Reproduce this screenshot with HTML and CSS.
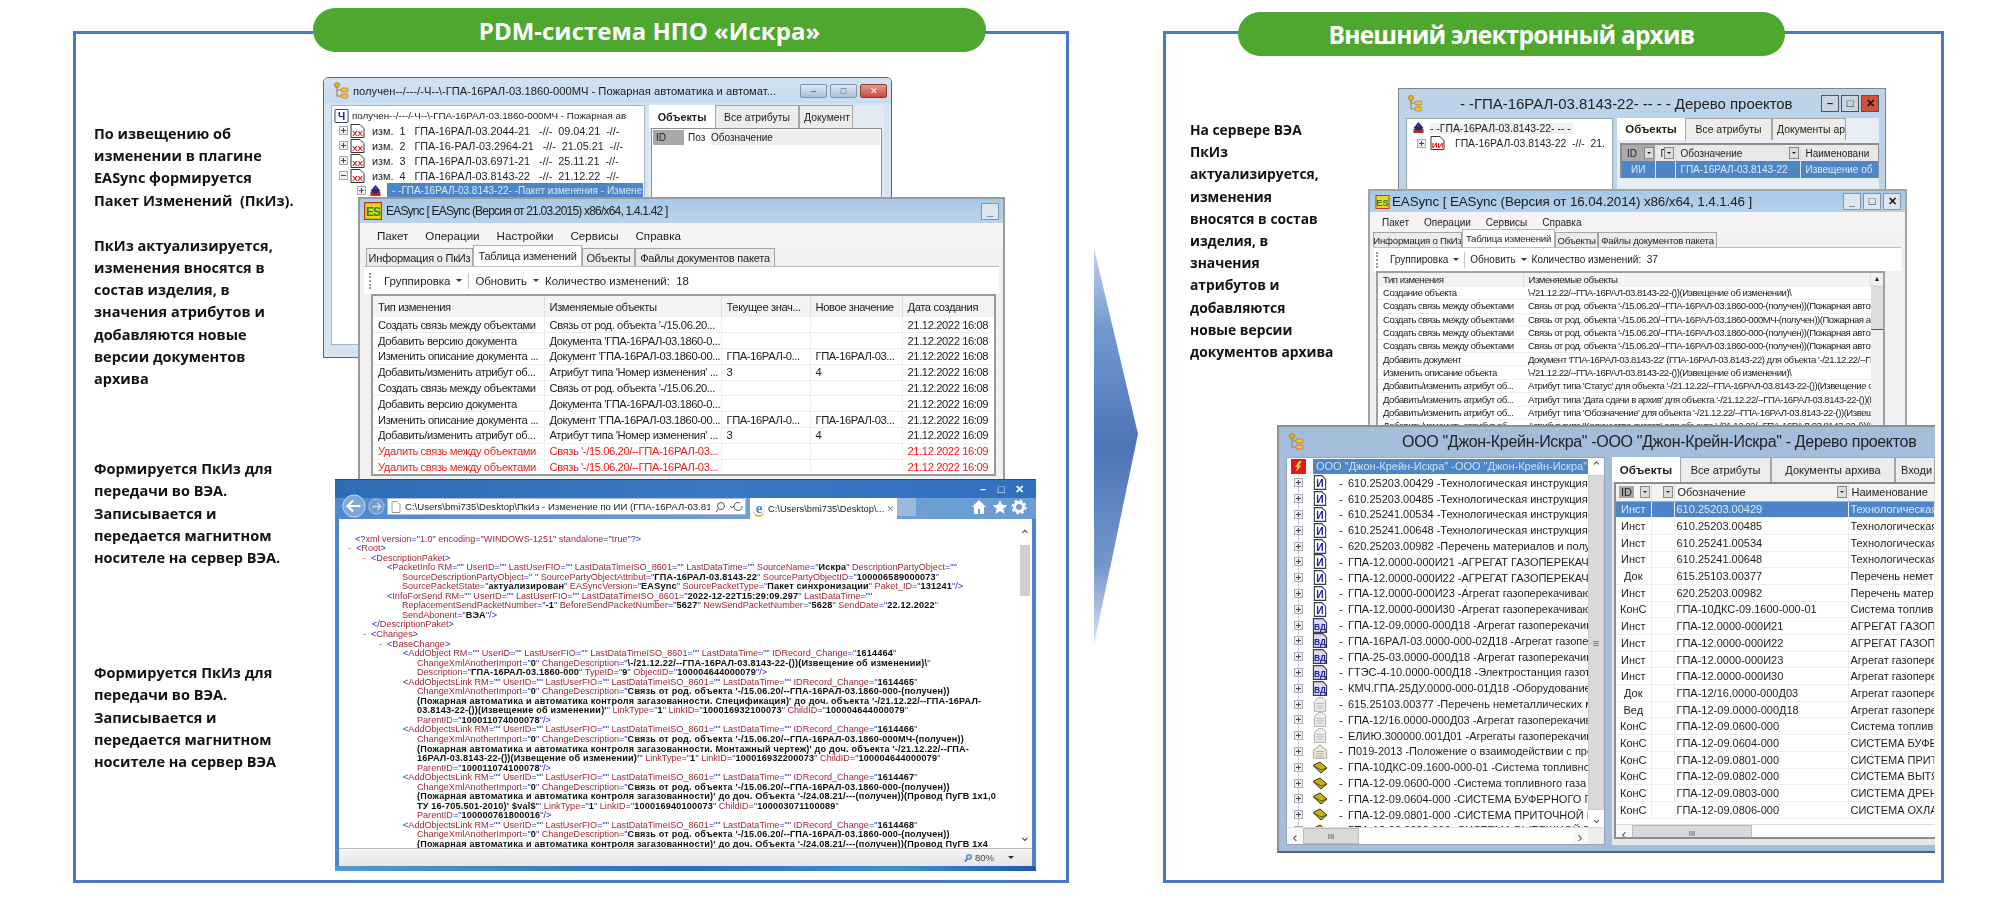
FILE: index.html
```html
<!DOCTYPE html>
<html lang="ru">
<head>
<meta charset="utf-8">
<title>PDM-система НПО «Искра» и внешний электронный архив</title>
<link rel="stylesheet" href="styles.css">
</head>
<body>
<svg class="defs" width="0" height="0" aria-hidden="true">
  <defs>
    <symbol id="tree-ico" viewBox="0 0 16 18">
      <path d="M4 3v11h5M4 8h5" fill="none" stroke="#9a8a50" stroke-width="1.2"/>
      <circle cx="4" cy="3" r="2.6" fill="#e8b030" stroke="#a87818" stroke-width=".7"/>
      <rect x="8" y="6" width="7" height="4" rx="1.6" fill="#f0c040" stroke="#a87818" stroke-width=".7"/>
      <rect x="8" y="12" width="7" height="4" rx="1.6" fill="#f0c040" stroke="#a87818" stroke-width=".7"/>
    </symbol>
    <symbol id="plus" viewBox="0 0 9 9">
      <rect x=".5" y=".5" width="8" height="8" fill="#eef1f4" stroke="#a6acb2"/>
      <path d="M2 4.5h5M4.5 2v5" stroke="#3c4a58"/>
    </symbol>
    <symbol id="minus" viewBox="0 0 9 9">
      <rect x=".5" y=".5" width="8" height="8" fill="#eef1f4" stroke="#a6acb2"/>
      <path d="M2 4.5h5" stroke="#3c4a58"/>
    </symbol>
    <symbol id="doc-xx" viewBox="0 0 15 14">
      <path d="M1 .5h9l4 4v9H1z" fill="#fff" stroke="#333"/>
      <text x="7.5" y="12" class="sym-red">XX</text>
    </symbol>
    <symbol id="doc-ii" viewBox="0 0 15 14">
      <path d="M1 .5h9l4 4v9H1z" fill="#fff" stroke="#333"/>
      <text x="7.5" y="12" class="sym-red">ИИ</text>
    </symbol>
    <symbol id="doc-i" viewBox="0 0 14 16">
      <path d="M1 .7h8l4 4v10.6H1z" fill="#fff" stroke="#3a3a4a" stroke-width="1.2"/>
      <text x="7" y="13" class="sym-blue">И</text>
    </symbol>
    <symbol id="doc-vd" viewBox="0 0 16 16">
      <path d="M1 .7h10l4 4v10.6H1z" fill="#d8d8ee" stroke="#3a3a4a" stroke-width="1.2"/>
      <text x="8" y="13" class="sym-blue2">ВД</text>
    </symbol>
    <symbol id="doc-gray" viewBox="0 0 14 16">
      <path d="M5 .7h5l3 3v11.6H1V5z" fill="#ececec" stroke="#a8a8a8"/>
      <path d="M3 7h8M3 9.5h8M3 12h8" stroke="#b4b4b4"/>
    </symbol>
    <symbol id="doc-house" viewBox="0 0 16 16">
      <path d="M8 .7l7 6v8.6H1V6.700z" fill="#ece6d8" stroke="#a8a090"/>
      <path d="M4 8h8M4 10.500h8M4 13h8" stroke="#b0a896"/>
    </symbol>
    <symbol id="brick" viewBox="0 0 16 12">
      <path d="M1 4l7-3.500 7 6-6 5z" fill="#ccb010" stroke="#30300c"/>
      <path d="M1 4l8 4.500 6-2" fill="none" stroke="#5c5410"/>
    </symbol>
    <symbol id="books" viewBox="0 0 14 14">
      <rect x="2" y="8" width="10" height="4" fill="#b02828"/>
      <path d="M2 7l5-6 5 6-5 3z" fill="#28286c"/>
      <circle cx="7" cy="4" r="2" fill="#3038a0"/>
    </symbol>
    <symbol id="es" viewBox="0 0 15 15">
      <rect x=".5" y=".5" width="14" height="14" fill="#e6d820" stroke="#c03020"/>
      <text x="7.500" y="11.300" class="sym-es">ES</text>
    </symbol>
    <symbol id="xdoc" viewBox="0 0 15 15">
      <rect x=".5" y=".5" width="14" height="14" rx="1" fill="#fff" stroke="#29295c"/>
      <text x="7.500" y="12" class="sym-blue">Ч</text>
    </symbol>
  </defs>
</svg>

<main class="slide">
  <section class="panel panel-left">
    <h2 class="pill pill-left">PDM-система НПО «Искра»</h2>
    <div class="notes notes-left">
      <p class="note n1">По извещению об<br>изменении в плагине<br>EASync формируется<br>Пакет Изменений&nbsp; (ПкИз).</p>
      <p class="note n2">ПкИз актуализируется,<br>изменения вносятся в<br>состав изделия, в<br>значения атрибутов и<br>добавляются новые<br>версии документов<br>архива</p>
      <p class="note n3">Формируется ПкИз для<br>передачи во ВЭА.<br>Записывается и<br>передается магнитном<br>носителе на сервер ВЭА.</p>
      <p class="note">Формируется ПкИз для<br>передачи во ВЭА.<br>Записывается и<br>передается магнитном<br>носителе на сервер ВЭА</p>
    </div>

    <!-- Окно дерева извещений -->
    <article class="win win1">
      <header class="w1-title">
        <svg class="ico16"><use href="#tree-ico"/></svg>
        <span class="w1-title-text">получен--/---/-Ч--\-ГПА-16РАЛ-03.1860-000МЧ - Пожарная автоматика и автомат...</span>
        <span class="aero-btns"><i class="aero-btn">&#8211;</i><i class="aero-btn">&#9633;</i><i class="aero-btn aero-close">&#10005;</i></span>
      </header>
      <div class="w1-body">
        <div class="w1-tree">
          <div class="w1-row w1-root"><svg class="ico15"><use href="#xdoc"/></svg><span>получен--/---/-Ч--\-ГПА-16РАЛ-03.1860-000МЧ - Пожарная ав</span></div>
          <div class="w1-row"><svg class="ico9"><use href="#plus"/></svg><svg class="ico15"><use href="#doc-xx"/></svg><span>изм.&nbsp; 1&nbsp;&nbsp; ГПА-16РАЛ-03.2044-21&nbsp;&nbsp; -//-&nbsp; 09.04.21&nbsp; -//-</span></div>
          <div class="w1-row"><svg class="ico9"><use href="#plus"/></svg><svg class="ico15"><use href="#doc-xx"/></svg><span>изм.&nbsp; 2&nbsp;&nbsp; ГПА-16-РАЛ-03.2964-21&nbsp;&nbsp; -//-&nbsp; 21.05.21&nbsp; -//-</span></div>
          <div class="w1-row"><svg class="ico9"><use href="#plus"/></svg><svg class="ico15"><use href="#doc-xx"/></svg><span>изм.&nbsp; 3&nbsp;&nbsp; ГПА-16РАЛ-03.6971-21&nbsp;&nbsp; -//-&nbsp; 25.11.21&nbsp; -//-</span></div>
          <div class="w1-row"><svg class="ico9"><use href="#minus"/></svg><svg class="ico15"><use href="#doc-xx"/></svg><span>изм.&nbsp; 4&nbsp;&nbsp; ГПА-16РАЛ-03.8143-22&nbsp;&nbsp; -//-&nbsp; 21.12.22&nbsp; -//-</span></div>
          <div class="w1-row w1-child"><svg class="ico9"><use href="#plus"/></svg><svg class="ico15"><use href="#books"/></svg><span class="w1-sel">- -ГПА-16РАЛ-03.8143-22- -Пакет изменения - Измене</span></div>
        </div>
        <div class="w1-side">
          <div class="tabs w1-tabs">
            <span class="tab tab-bold w1-t1">Объекты</span><span class="tab w1-t2">Все атрибуты</span><span class="tab w1-t3">Документ</span>
          </div>
          <div class="w1-grid"><span class="w1-id">ID</span><span class="w1-poz">Поз</span><span>Обозначение</span></div>
        </div>
      </div>
    </article>

    <!-- EASync, таблица изменений пакета -->
    <article class="win win2">
      <header class="w2-title"><svg class="ico18"><use href="#es"/></svg><span>EASync [ EASync (Версия от 21.03.2015) x86/x64, 1.4.1.42 ]</span><span class="sq-btns"><i class="sq-btn">_</i></span></header>
      <nav class="w2-menu"><span>Пакет</span><span>Операции</span><span>Настройки</span><span>Сервисы</span><span>Справка</span></nav>
      <div class="tabs w2-tabs">
        <span class="tab w2-t1">Информация о ПкИз</span><span class="tab tab-on w2-t2">Таблица изменений</span><span class="tab w2-t3">Объекты</span><span class="tab w2-t4">Файлы документов пакета</span>
      </div>
      <div class="w2-tools"><i class="grip"></i><span>Группировка</span><i class="caret"></i><i class="sep"></i><span>Обновить</span><i class="caret"></i><span>Количество изменений:&nbsp; 18</span></div>
      <table class="grid w2-grid">
        <thead><tr><th class="w2-c1">Тип изменения</th><th class="w2-c2">Изменяемые объекты</th><th class="w2-c3">Текущее знач...</th><th class="w2-c4">Новое значение</th><th class="w2-c5">Дата создания</th></tr></thead>
        <tbody>
          <tr><td>Создать связь между объектами</td><td>Связь от род. объекта '-/15.06.20...</td><td></td><td></td><td>21.12.2022 16:08</td></tr>
          <tr><td>Добавить версию документа</td><td>Документа 'ГПА-16РАЛ-03.1860-0...</td><td></td><td></td><td>21.12.2022 16:08</td></tr>
          <tr><td>Изменить описание документа ...</td><td>Документ 'ГПА-16РАЛ-03.1860-00...</td><td>ГПА-16РАЛ-0...</td><td>ГПА-16РАЛ-03...</td><td>21.12.2022 16:08</td></tr>
          <tr><td>Добавить/изменить атрибут об...</td><td>Атрибут типа 'Номер изменения' ...</td><td>3</td><td>4</td><td>21.12.2022 16:08</td></tr>
          <tr><td>Создать связь между объектами</td><td>Связь от род. объекта '-/15.06.20...</td><td></td><td></td><td>21.12.2022 16:08</td></tr>
          <tr><td>Добавить версию документа</td><td>Документа 'ГПА-16РАЛ-03.1860-0...</td><td></td><td></td><td>21.12.2022 16:09</td></tr>
          <tr><td>Изменить описание документа ...</td><td>Документ 'ГПА-16РАЛ-03.1860-00...</td><td>ГПА-16РАЛ-0...</td><td>ГПА-16РАЛ-03...</td><td>21.12.2022 16:09</td></tr>
          <tr><td>Добавить/изменить атрибут об...</td><td>Атрибут типа 'Номер изменения' ...</td><td>3</td><td>4</td><td>21.12.2022 16:09</td></tr>
          <tr class="red"><td>Удалить связь между объектами</td><td>Связь '-/15.06.20/--ГПА-16РАЛ-03...</td><td></td><td></td><td>21.12.2022 16:09</td></tr>
          <tr class="red"><td>Удалить связь между объектами</td><td>Связь '-/15.06.20/--ГПА-16РАЛ-03...</td><td></td><td></td><td>21.12.2022 16:09</td></tr>
        </tbody>
      </table>
    </article>

    <!-- Браузер с XML пакета -->
    <article class="win win3">
      <div class="glass-top"><span class="glass-ctl"><i>&#8211;</i><i>&#9633;</i><i>&#10005;</i></span></div>
      <div class="glass-nav">
        <svg class="nav-back" viewBox="0 0 26 26"><circle cx="13" cy="13" r="12" fill="#7da8da" stroke="#cfe0f2"/><path d="M20 13H7m5-6l-6 6 6 6" fill="none" stroke="#fff" stroke-width="2.400"/></svg>
        <svg class="nav-fwd" viewBox="0 0 20 20"><circle cx="10" cy="10" r="9" fill="#6f9ed4" stroke="#b8d0ea"/><path d="M5 10h10M11 6l4 4-4 4" fill="none" stroke="#cfe0f2" stroke-width="1.600"/></svg>
        <div class="addr"><svg class="addr-page" viewBox="0 0 10 12"><path d="M1 .5h5l3 3v8H1z" fill="#fff" stroke="#9a9a9a"/></svg><span class="addr-text">C:\Users\bmi735\Desktop\ПкИз - Изменение по ИИ (ГПА-16РАЛ-03.8143-2;</span><svg class="addr-search" viewBox="0 0 30 12"><circle cx="7" cy="5" r="3.500" fill="none" stroke="#555"/><path d="M4 8l-2 3M16 5l2 2 2-2M26 2a4 4 0 1 0 2 3" fill="none" stroke="#555"/></svg></div>
        <div class="ie-tab"><span class="ie-e">e</span><span class="ie-text">C:\Users\bmi735\Desktop\...</span><span class="ie-x">&#215;</span></div>
        <i class="ie-new"></i>
        <svg class="ie-tools" viewBox="0 0 56 16"><path d="M8 1L1 8h2v7h4v-5h2v5h4V8h2z" fill="#fff"/><path d="M29 1l2.100 4.800 5.200.5-3.900 3.400 1.100 5.100-4.500-2.700-4.500 2.700 1.100-5.100-3.900-3.400 5.200-.5z" fill="#fff"/><circle cx="48" cy="8" r="4.500" fill="none" stroke="#fff" stroke-width="3"/><circle cx="48" cy="8" r="6.500" fill="none" stroke="#fff" stroke-width="2" stroke-dasharray="2.500 2.600"/></svg>
      </div>
      <div class="ie-page">
        <div class="xml">
          <div class="x i16"><i>&lt;?</i>xml version<i>="</i>1.0<i>"</i> encoding<i>="</i>WINDOWS-1251<i>"</i> standalone<i>="</i>true<i>"?&gt;</i></div>
          <div class="x i9"><s>-</s><i>&lt;</i>Root<i>&gt;</i></div>
          <div class="x i24"><s>-</s><i>&lt;</i>DescriptionPaket<i>&gt;</i></div>
          <div class="x i48"><i>&lt;</i>PacketInfo RM<i>=""</i> UserID<i>=""</i> LastUserFIO<i>=""</i> LastDataTimeISO_8601<i>=""</i> LastDataTime<i>=""</i> SourceName<i>="</i><b>Искра</b><i>"</i> DescriptionPartyObject<i>=""</i></div>
          <div class="x i63">SourceDescriptionPartyObject<i>=" "</i> SourcePartyObjectAttribut<i>="</i><b>ГПА-16РАЛ-03.8143-22</b><i>"</i> SourcePartyObjectID<i>="</i><b>100006589000073</b><i>"</i></div>
          <div class="x i63">SourcePacketState<i>="</i><b>актуализирован</b><i>"</i> EASyncVersion<i>="</i><b>EASync</b><i>"</i> SourcePacketType<i>="</i><b>Пакет синхронизации</b><i>"</i> Paket_ID<i>="</i><b>131241</b><i>"/&gt;</i></div>
          <div class="x i48"><i>&lt;</i>InfoForSend RM<i>=""</i> UserID<i>=""</i> LastUserFIO<i>=""</i> LastDataTimeISO_8601<i>="</i><b>2022-12-22T15:29:09.297</b><i>"</i> LastDataTime<i>=""</i></div>
          <div class="x i63">ReplacementSendPacketNumber<i>="</i><b>-1</b><i>"</i> BeforeSendPacketNumber<i>="</i><b>5627</b><i>"</i> NewSendPacketNumber<i>="</i><b>5628</b><i>"</i> SendDate<i>="</i><b>22.12.2022</b><i>"</i></div>
          <div class="x i63">SendAbonent<i>="</i><b>ВЭА</b><i>"/&gt;</i></div>
          <div class="x i33"><i>&lt;/</i>DescriptionPaket<i>&gt;</i></div>
          <div class="x i24"><s>-</s><i>&lt;</i>Changes<i>&gt;</i></div>
          <div class="x i40"><s>-</s><i>&lt;</i>BaseChange<i>&gt;</i></div>
          <div class="x i64"><i>&lt;</i>AddObject RM<i>=""</i> UserID<i>=""</i> LastUserFIO<i>=""</i> LastDataTimeISO_8601<i>=""</i> LastDataTime<i>=""</i> IDRecord_Change<i>="</i><b>1614464</b><i>"</i></div>
          <div class="x i78">ChangeXmlAnotherImport<i>="</i><b>0</b><i>"</i> ChangeDescription<i>="</i><b>\-/21.12.22/--ГПА-16РАЛ-03.8143-22-())(Извещение об изменении)\</b><i>"</i></div>
          <div class="x i78">Description<i>="</i><b>ГПА-16РАЛ-03.1860-000</b><i>"</i> TypeID<i>="</i><b>9</b><i>"</i> ObjectID<i>="</i><b>100004644000079</b><i>"/&gt;</i></div>
          <div class="x i64"><i>&lt;</i>AddObjectsLink RM<i>=""</i> UserID<i>=""</i> LastUserFIO<i>=""</i> LastDataTimeISO_8601<i>=""</i> LastDataTime<i>=""</i> IDRecord_Change<i>="</i><b>1614465</b><i>"</i></div>
          <div class="x i78">ChangeXmlAnotherImport<i>="</i><b>0</b><i>"</i> ChangeDescription<i>="</i><b>Связь от род. объекта '-/15.06.20/--ГПА-16РАЛ-03.1860-000-(получен))</b></div>
          <div class="x i78"><b>(Пожарная автоматика и автоматика контроля загазованности. Спецификация)' до доч. объекта '-/21.12.22/--ГПА-16РАЛ-</b></div>
          <div class="x i78"><b>03.8143-22-())(Извещение об изменении)'</b><i>"</i> LinkType<i>="</i><b>1</b><i>"</i> LinkID<i>="</i><b>100016932100073</b><i>"</i> ChildID<i>="</i><b>100004644000079</b><i>"</i></div>
          <div class="x i78">ParentID<i>="</i><b>100011074000078</b><i>"/&gt;</i></div>
          <div class="x i64"><i>&lt;</i>AddObjectsLink RM<i>=""</i> UserID<i>=""</i> LastUserFIO<i>=""</i> LastDataTimeISO_8601<i>=""</i> LastDataTime<i>=""</i> IDRecord_Change<i>="</i><b>1614466</b><i>"</i></div>
          <div class="x i78">ChangeXmlAnotherImport<i>="</i><b>0</b><i>"</i> ChangeDescription<i>="</i><b>Связь от род. объекта '-/15.06.20/--ГПА-16РАЛ-03.1860-000МЧ-(получен))</b></div>
          <div class="x i78"><b>(Пожарная автоматика и автоматика контроля загазованности. Монтажный чертеж)' до доч. объекта '-/21.12.22/--ГПА-</b></div>
          <div class="x i78"><b>16РАЛ-03.8143-22-())(Извещение об изменении)'</b><i>"</i> LinkType<i>="</i><b>1</b><i>"</i> LinkID<i>="</i><b>100016932200073</b><i>"</i> ChildID<i>="</i><b>100004644000079</b><i>"</i></div>
          <div class="x i78">ParentID<i>="</i><b>100011074100078</b><i>"/&gt;</i></div>
          <div class="x i64"><i>&lt;</i>AddObjectsLink RM<i>=""</i> UserID<i>=""</i> LastUserFIO<i>=""</i> LastDataTimeISO_8601<i>=""</i> LastDataTime<i>=""</i> IDRecord_Change<i>="</i><b>1614467</b><i>"</i></div>
          <div class="x i78">ChangeXmlAnotherImport<i>="</i><b>0</b><i>"</i> ChangeDescription<i>="</i><b>Связь от род. объекта '-/15.06.20/--ГПА-16РАЛ-03.1860-000-(получен))</b></div>
          <div class="x i78"><b>(Пожарная автоматика и автоматика контроля загазованности)' до доч. Объекта '-/24.08.21/---(получен))(Провод ПуГВ 1х1,0</b></div>
          <div class="x i78"><b>ТУ 16-705.501-2010)' $val$'</b><i>"</i> LinkType<i>="</i><b>1</b><i>"</i> LinkID<i>="</i><b>100016940100073</b><i>"</i> ChildID<i>="</i><b>100003071100089</b><i>"</i></div>
          <div class="x i78">ParentID<i>="</i><b>100000761800016</b><i>"/&gt;</i></div>
          <div class="x i64"><i>&lt;</i>AddObjectsLink RM<i>=""</i> UserID<i>=""</i> LastUserFIO<i>=""</i> LastDataTimeISO_8601<i>=""</i> LastDataTime<i>=""</i> IDRecord_Change<i>="</i><b>1614468</b><i>"</i></div>
          <div class="x i78">ChangeXmlAnotherImport<i>="</i><b>0</b><i>"</i> ChangeDescription<i>="</i><b>Связь от род. объекта '-/15.06.20/--ГПА-16РАЛ-03.1860-000-(получен))</b></div>
          <div class="x i78"><b>(Пожарная автоматика и автоматика контроля загазованности)' до доч. Объекта '-/24.08.21/---(получен))(Провод ПуГВ 1х4</b></div>
        </div>
        <div class="ie-scroll"><span class="ie-arrow">&#8963;</span><i class="ie-thumb"></i><span class="ie-arrow ie-down">&#8964;</span></div>
      </div>
      <footer class="ie-status"><svg class="ie-zoom" viewBox="0 0 9 9"><circle cx="5" cy="4" r="3" fill="#5a94d0"/><path d="M3 6L1 8.500" stroke="#2a5a96" stroke-width="1.400"/><path d="M3.500 4h3M5 2.500v3" stroke="#fff" stroke-width=".8"/></svg><span>80%</span><i class="caret"></i></footer>
      <div class="glass-bottom"></div>
    </article>
  </section>

  <div class="arrow-col">
    <svg class="big-arrow" viewBox="0 0 44 397">
      <defs>
        <linearGradient id="arrow-fill" x1="0" y1="0" x2="0" y2="1">
          <stop offset="0" stop-color="#c4d3ec"/>
          <stop offset=".2" stop-color="#7398d0"/>
          <stop offset=".5" stop-color="#4c74b8"/>
          <stop offset=".8" stop-color="#7396cc"/>
          <stop offset="1" stop-color="#dbe5f4"/>
        </linearGradient>
      </defs>
      <path d="M0 0L44 186 0 397z" fill="url(#arrow-fill)"/>
    </svg>
  </div>

  <section class="panel panel-right">
    <h2 class="pill pill-right">Внешний электронный архив</h2>
    <div class="notes notes-right">
      <p class="note">На сервере ВЭА<br>ПкИз<br>актуализируется,<br>изменения<br>вносятся в состав<br>изделия, в<br>значения<br>атрибутов и<br>добавляются<br>новые версии<br>документов архива</p>
    </div>

    <article class="win win4">
      <header class="w4-title"><svg class="ico18"><use href="#tree-ico"/></svg><span class="w4-title-text">- -ГПА-16РАЛ-03.8143-22- -- - - Дерево проектов</span><span class="w4-btns"><i>&#8211;</i><i>&#9633;</i><i class="w4-close">&#10005;</i></span></header>
      <div class="w4-body">
        <div class="w4-tree">
          <div class="w4-row"><svg class="ico15"><use href="#books"/></svg><span class="w4-root">- -ГПА-16РАЛ-03.8143-22- -- -</span></div>
          <div class="w4-row w4-child"><svg class="ico9"><use href="#plus"/></svg><svg class="ico15"><use href="#doc-ii"/></svg><span>ГПА-16РАЛ-03.8143-22&nbsp; -//-&nbsp; 21.</span></div>
        </div>
        <div class="w4-side">
          <div class="tabs w4-tabs"><span class="tab tab-bold w4-t1">Объекты</span><span class="tab w4-t2">Все атрибуты</span><span class="tab w4-t3">Документы ар</span></div>
          <table class="grid w4-grid">
            <thead><tr><th class="w4-c1">ID<i class="drop"></i></th><th class="w4-c2">П<i class="drop"></i></th><th class="w4-c3">Обозначение<i class="drop"></i></th><th class="w4-c4">Наименовани</th></tr></thead>
            <tbody><tr class="sel"><td class="ctr">ИИ</td><td></td><td>ГПА-16РАЛ-03.8143-22</td><td>Извещение об</td></tr></tbody>
          </table>
        </div>
      </div>
    </article>

    <article class="win win5">
      <header class="w5-title"><svg class="ico15"><use href="#es"/></svg><span>EASync [ EASync (Версия от 16.04.2014) x86/x64, 1.4.1.46 ]</span><span class="sq-btns"><i class="sq-btn">_</i><i class="sq-btn">&#9633;</i><i class="sq-btn">&#10005;</i></span></header>
      <nav class="w5-menu"><span>Пакет</span><span>Операции</span><span>Сервисы</span><span>Справка</span></nav>
      <div class="tabs w5-tabs"><span class="tab w5-t1">Информация о ПкИз</span><span class="tab tab-on w5-t2">Таблица изменений</span><span class="tab w5-t3">Объекты</span><span class="tab w5-t4">Файлы документов пакета</span></div>
      <div class="w5-tools"><i class="grip"></i><span>Группировка</span><i class="caret"></i><i class="sep"></i><span>Обновить</span><i class="caret"></i><span>Количество изменений:&nbsp; 37</span></div>
      <div class="w5-gridwrap">
        <table class="grid w5-grid">
          <thead><tr><th class="w5-c1">Тип изменения</th><th>Изменяемые объекты</th></tr></thead>
          <tbody>
            <tr><td>Создание объекта</td><td>\-/21.12.22/--ГПА-16РАЛ-03.8143-22-())(Извещение об изменении)\</td></tr>
            <tr><td>Создать связь между объектами</td><td>Связь от род. объекта '-/15.06.20/--ГПА-16РАЛ-03.1860-000-(получен))(Пожарная автомать</td></tr>
            <tr><td>Создать связь между объектами</td><td>Связь от род. объекта '-/15.06.20/--ГПА-16РАЛ-03.1860-000МЧ-(получен))(Пожарная автом</td></tr>
            <tr><td>Создать связь между объектами</td><td>Связь от род. объекта '-/15.06.20/--ГПА-16РАЛ-03.1860-000-(получен))(Пожарная автомать</td></tr>
            <tr><td>Создать связь между объектами</td><td>Связь от род. объекта '-/15.06.20/--ГПА-16РАЛ-03.1860-000-(получен))(Пожарная автомать</td></tr>
            <tr><td>Добавить документ</td><td>Документ 'ГПА-16РАЛ-03.8143-22' (ГПА-16РАЛ-03.8143-22) для объекта '-/21.12.22/--ГПА</td></tr>
            <tr><td>Изменить описание объекта</td><td>\-/21.12.22/--ГПА-16РАЛ-03.8143-22-())(Извещение об изменении)\</td></tr>
            <tr><td>Добавить/изменить атрибут об...</td><td>Атрибут типа 'Статус' для объекта '-/21.12.22/--ГПА-16РАЛ-03.8143-22-())(Извещение об из</td></tr>
            <tr><td>Добавить/изменить атрибут об...</td><td>Атрибут типа 'Дата сдачи в архив' для объекта '-/21.12.22/--ГПА-16РАЛ-03.8143-22-())(Изве</td></tr>
            <tr><td>Добавить/изменить атрибут об...</td><td>Атрибут типа 'Обозначение' для объекта '-/21.12.22/--ГПА-16РАЛ-03.8143-22-())(Извещени</td></tr>
            <tr><td>Добавить/изменить атрибут об...</td><td>Атрибут типа 'Количество листов' для объекта '-/21.12.22/--ГПА-16РАЛ-03.8143-22-())(Изве</td></tr>
          </tbody>
        </table>
        <div class="w5-scroll"><span>&#9650;</span><i></i></div>
      </div>
    </article>

    <article class="win win6">
      <header class="w6-title"><svg class="w6-ico"><use href="#tree-ico"/></svg><span class="w6-title-text">ООО "Джон-Крейн-Искра" -ООО "Джон-Крейн-Искра" - Дерево проектов</span></header>
      <div class="w6-body">
        <div class="w6-left">
          <div class="w6-top">
            <div class="w6-tree">
              <div class="w6-row w6-root"><span class="bolt"></span><span class="w6-sel">ООО "Джон-Крейн-Искра" -ООО "Джон-Крейн-Искра"</span></div>
              <div class="w6-row"><svg class="ico9"><use href="#plus"/></svg><svg class="ico-doc"><use href="#doc-i"/></svg><span class="dash">-</span><span class="w6-text">610.25203.00429 -Технологическая инструкция.</span></div>
              <div class="w6-row"><svg class="ico9"><use href="#plus"/></svg><svg class="ico-doc"><use href="#doc-i"/></svg><span class="dash">-</span><span class="w6-text">610.25203.00485 -Технологическая инструкция.</span></div>
              <div class="w6-row"><svg class="ico9"><use href="#plus"/></svg><svg class="ico-doc"><use href="#doc-i"/></svg><span class="dash">-</span><span class="w6-text">610.25241.00534 -Технологическая инструкция</span></div>
              <div class="w6-row"><svg class="ico9"><use href="#plus"/></svg><svg class="ico-doc"><use href="#doc-i"/></svg><span class="dash">-</span><span class="w6-text">610.25241.00648 -Технологическая инструкция</span></div>
              <div class="w6-row"><svg class="ico9"><use href="#plus"/></svg><svg class="ico-doc"><use href="#doc-i"/></svg><span class="dash">-</span><span class="w6-text">620.25203.00982 -Перечень материалов и полуф</span></div>
              <div class="w6-row"><svg class="ico9"><use href="#plus"/></svg><svg class="ico-doc"><use href="#doc-i"/></svg><span class="dash">-</span><span class="w6-text">ГПА-12.0000-000И21 -АГРЕГАТ ГАЗОПЕРЕКАЧИВ</span></div>
              <div class="w6-row"><svg class="ico9"><use href="#plus"/></svg><svg class="ico-doc"><use href="#doc-i"/></svg><span class="dash">-</span><span class="w6-text">ГПА-12.0000-000И22 -АГРЕГАТ ГАЗОПЕРЕКАЧИВ</span></div>
              <div class="w6-row"><svg class="ico9"><use href="#plus"/></svg><svg class="ico-doc"><use href="#doc-i"/></svg><span class="dash">-</span><span class="w6-text">ГПА-12.0000-000И23 -Агрегат газоперекачиваю</span></div>
              <div class="w6-row"><svg class="ico9"><use href="#plus"/></svg><svg class="ico-doc"><use href="#doc-i"/></svg><span class="dash">-</span><span class="w6-text">ГПА-12.0000-000И30 -Агрегат газоперекачиваю</span></div>
              <div class="w6-row"><svg class="ico9"><use href="#plus"/></svg><svg class="ico-doc"><use href="#doc-vd"/></svg><span class="dash">-</span><span class="w6-text">ГПА-12-09.0000-000Д18 -Агрегат газоперекачив</span></div>
              <div class="w6-row"><svg class="ico9"><use href="#plus"/></svg><svg class="ico-doc"><use href="#doc-vd"/></svg><span class="dash">-</span><span class="w6-text">ГПА-16РАЛ-03.0000-000-02Д18 -Агрегат газопер</span></div>
              <div class="w6-row"><svg class="ico9"><use href="#plus"/></svg><svg class="ico-doc"><use href="#doc-vd"/></svg><span class="dash">-</span><span class="w6-text">ГПА-25-03.0000-000Д18 -Агрегат газоперекачив</span></div>
              <div class="w6-row"><svg class="ico9"><use href="#plus"/></svg><svg class="ico-doc"><use href="#doc-vd"/></svg><span class="dash">-</span><span class="w6-text">ГТЭС-4-10.0000-000Д18 -Электростанция газот</span></div>
              <div class="w6-row"><svg class="ico9"><use href="#plus"/></svg><svg class="ico-doc"><use href="#doc-vd"/></svg><span class="dash">-</span><span class="w6-text">КМЧ.ГПА-25ДУ.0000-000-01Д18 -Оборудование</span></div>
              <div class="w6-row"><svg class="ico9"><use href="#plus"/></svg><svg class="ico-doc"><use href="#doc-gray"/></svg><span class="dash">-</span><span class="w6-text">615.25103.00377 -Перечень неметаллических ма</span></div>
              <div class="w6-row"><svg class="ico9"><use href="#plus"/></svg><svg class="ico-doc"><use href="#doc-gray"/></svg><span class="dash">-</span><span class="w6-text">ГПА-12/16.0000-000Д03 -Агрегат газоперекачив</span></div>
              <div class="w6-row"><svg class="ico9"><use href="#plus"/></svg><svg class="ico-doc"><use href="#doc-gray"/></svg><span class="dash">-</span><span class="w6-text">ЕЛИЮ.300000.001Д01 -Агрегаты газоперекачив</span></div>
              <div class="w6-row"><svg class="ico9"><use href="#plus"/></svg><svg class="ico-doc"><use href="#doc-house"/></svg><span class="dash">-</span><span class="w6-text">П019-2013 -Положение о взаимодействии с пред</span></div>
              <div class="w6-row"><svg class="ico9"><use href="#plus"/></svg><svg class="ico-doc"><use href="#brick"/></svg><span class="dash">-</span><span class="w6-text">ГПА-10ДКС-09.1600-000-01 -Система топливног</span></div>
              <div class="w6-row"><svg class="ico9"><use href="#plus"/></svg><svg class="ico-doc"><use href="#brick"/></svg><span class="dash">-</span><span class="w6-text">ГПА-12-09.0600-000 -Система топливного газа</span></div>
              <div class="w6-row"><svg class="ico9"><use href="#plus"/></svg><svg class="ico-doc"><use href="#brick"/></svg><span class="dash">-</span><span class="w6-text">ГПА-12-09.0604-000 -СИСТЕМА БУФЕРНОГО ГАЗ</span></div>
              <div class="w6-row"><svg class="ico9"><use href="#plus"/></svg><svg class="ico-doc"><use href="#brick"/></svg><span class="dash">-</span><span class="w6-text">ГПА-12-09.0801-000 -СИСТЕМА ПРИТОЧНОЙ ВЕН</span></div>
              <div class="w6-row"><svg class="ico9"><use href="#plus"/></svg><svg class="ico-doc"><use href="#brick"/></svg><span class="dash">-</span><span class="w6-text">ГПА-12-09.0802-000 -СИСТЕМА ВЫТЯЖНОЙ ВЕНТ</span></div>
            </div>
            <div class="vbar"><span class="sb-btn">&#8963;</span><span class="sb-track"><i>&#8801;</i></span><span class="sb-btn">&#8964;</span></div>
          </div>
          <div class="hbar"><span class="sb-btn sb-h">&lsaquo;</span><span class="hbar-thumb">III</span><span class="hbar-fill"></span><span class="sb-btn sb-h">&rsaquo;</span><span class="sb-corner"></span></div>
        </div>
        <div class="w6-right">
          <div class="tabs w6-tabs"><span class="tab tab-bold w6-t1">Объекты</span><span class="tab w6-t2">Все атрибуты</span><span class="tab w6-t3">Документы архива</span><span class="tab w6-t4">Входи</span></div>
          <div class="w6-gridwrap">
            <table class="grid w6-grid">
              <thead><tr><th class="w6-c1"><span class="hd-id">ID</span><i class="drop"></i></th><th class="w6-c2"><i class="drop"></i></th><th class="w6-c3">Обозначение<i class="drop"></i></th><th class="w6-c4">Наименование</th></tr></thead>
              <tbody>
                <tr class="sel"><td class="ctr">Инст</td><td></td><td>610.25203.00429</td><td>Технологическая</td></tr>
                <tr><td class="ctr">Инст</td><td></td><td>610.25203.00485</td><td>Технологическая</td></tr>
                <tr><td class="ctr">Инст</td><td></td><td>610.25241.00534</td><td>Технологическая</td></tr>
                <tr><td class="ctr">Инст</td><td></td><td>610.25241.00648</td><td>Технологическая</td></tr>
                <tr><td class="ctr">Док</td><td></td><td>615.25103.00377</td><td>Перечень немета</td></tr>
                <tr><td class="ctr">Инст</td><td></td><td>620.25203.00982</td><td>Перечень матери</td></tr>
                <tr><td class="ctr">КонС</td><td></td><td>ГПА-10ДКС-09.1600-000-01</td><td>Система топливн</td></tr>
                <tr><td class="ctr">Инст</td><td></td><td>ГПА-12.0000-000И21</td><td>АГРЕГАТ ГАЗОПЕ</td></tr>
                <tr><td class="ctr">Инст</td><td></td><td>ГПА-12.0000-000И22</td><td>АГРЕГАТ ГАЗОПЕ</td></tr>
                <tr><td class="ctr">Инст</td><td></td><td>ГПА-12.0000-000И23</td><td>Агрегат газопере</td></tr>
                <tr><td class="ctr">Инст</td><td></td><td>ГПА-12.0000-000И30</td><td>Агрегат газопере</td></tr>
                <tr><td class="ctr">Док</td><td></td><td>ГПА-12/16.0000-000Д03</td><td>Агрегат газопере</td></tr>
                <tr><td class="ctr">Вед</td><td></td><td>ГПА-12-09.0000-000Д18</td><td>Агрегат газопере</td></tr>
                <tr><td class="ctr">КонС</td><td></td><td>ГПА-12-09.0600-000</td><td>Система топливн</td></tr>
                <tr><td class="ctr">КонС</td><td></td><td>ГПА-12-09.0604-000</td><td>СИСТЕМА БУФЕРН</td></tr>
                <tr><td class="ctr">КонС</td><td></td><td>ГПА-12-09.0801-000</td><td>СИСТЕМА ПРИТО</td></tr>
                <tr><td class="ctr">КонС</td><td></td><td>ГПА-12-09.0802-000</td><td>СИСТЕМА ВЫТЯЖ</td></tr>
                <tr><td class="ctr">КонС</td><td></td><td>ГПА-12-09.0803-000</td><td>СИСТЕМА ДРЕНА</td></tr>
                <tr><td class="ctr">КонС</td><td></td><td>ГПА-12-09.0806-000</td><td>СИСТЕМА ОХЛАЖ</td></tr>
              </tbody>
            </table>
            <div class="hbar hbar-right"><span class="sb-btn sb-h">&lsaquo;</span><span class="hbar-thumb hbar-thumb-r">III</span><span class="hbar-fill"></span></div>
          </div>
        </div>
      </div>
    </article>
  </section>
</main>
</body>
</html>
```
FILE: styles.css
```css
* { box-sizing: border-box; }
html, body { margin: 0; padding: 0; background: #fff; }
body { font-family: "Open Sans", "Noto Sans", "Liberation Sans", sans-serif; color: #1c1c1c; overflow: hidden; }
.defs { position: absolute; }
.slide { width: 2000px; height: 903px; display: flex; padding: 31px 0 0 73px; overflow: hidden; }

.panel { position: relative; height: 852px; border: 3px solid #4a78c2; flex: none; }
.panel-left { width: 996px; }
.panel-right { width: 781px; }
.arrow-col { width: 94px; flex: none; padding: 217px 0 0 25px; }
.big-arrow { width: 44px; height: 397px; display: block; }

.pill { position: absolute; z-index: 9; margin: 0; height: 44px; border-radius: 22px; background: #4ea72e; color: #fff; display: flex; align-items: center; justify-content: center; font-weight: 700; }
.pill-left { left: 237px; top: -26px; width: 673px; font-size: 24px; }
.pill-right { left: 72px; top: -22px; width: 547px; font-size: 24.5px; letter-spacing: -.8px; }

.notes { font-weight: 700; font-size: 14.5px; line-height: 22.2px; color: #111; filter: blur(.3px); }
.notes-left { padding: 89px 0 0 18px; }
.notes-right { padding: 85px 0 0 24px; font-size: 13.8px; }
.note { margin: 0; white-space: nowrap; }
.n1 { margin-bottom: 23px; }
.n2 { margin-bottom: 68px; }
.n3 { margin-bottom: 93px; }

/* generic window */
.win { position: absolute; overflow: hidden; filter: blur(.35px); font-family: "Liberation Sans", Arial, sans-serif; }
.win1 { left: 247px; top: 43px; width: 569px; height: 281px; z-index: 1; background: #d5e4f3; border: 1px solid #5c6670; border-radius: 5px 5px 0 0; }
.win2 { left: 282px; top: 163px; width: 647px; height: 295px; z-index: 2; background: #f1f1f1; border: 2px solid #9a9a9a; border-bottom: 0; }
.win3 { left: 259px; top: 445px; width: 701px; height: 392px; z-index: 3; background: #4b86cb; display: flex; flex-direction: column; border-top: 1px solid #1a4f96; }
.win4 { left: 232px; top: 54px; width: 488px; height: 112px; z-index: 1; background: #bdd3ea; border: 1px solid #7a858f; }
.win5 { left: 202px; top: 155px; width: 539px; height: 240px; z-index: 2; background: #f1f1f1; border: 2px solid #a3a3a3; border-bottom: 0; }
.win6 { left: 111px; top: 391px; width: 658px; height: 428px; z-index: 3; background: #a3bdda; border-top: 2px solid #8a9098; border-left: 2px solid #8a9098; border-bottom: 2px solid #4f6478; }

svg { flex: none; display: block; }
.ico9 { width: 9px; height: 9px; }
.ico15 { width: 15px; height: 14px; }
.ico16 { width: 16px; height: 18px; }
.ico18 { width: 18px; height: 18px; }
.sym-red { font: 700 8px "Liberation Sans", sans-serif; fill: #e01010; text-anchor: middle; }
.sym-blue { font: 700 11px "Liberation Sans", sans-serif; fill: #2020a0; text-anchor: middle; }
.sym-blue2 { font: 700 9px "Liberation Sans", sans-serif; fill: #2020a0; text-anchor: middle; }
.sym-es { font: 700 10px "Liberation Sans", sans-serif; fill: #1c8a1c; text-anchor: middle; }

.tabs { display: flex; flex: none; }
.tab { display: flex; align-items: center; justify-content: center; white-space: nowrap; background: #ececec; border: 1px solid #a5a5a5; border-bottom: 0; overflow: hidden; }
.tab-on { background: #fff; border-color: #b4b4b4; margin-top: -3px; }
.tab-bold { font-weight: 700; background: #fff; border: 0; }

.grid { border-collapse: collapse; table-layout: fixed; background: #fff; white-space: nowrap; }
.grid th { font-weight: 400; text-align: left; background: #f3f3f3; overflow: hidden; padding: 0 0 0 5px; border-right: 1px solid #dedede; position: relative; }
.grid td { padding: 0 0 0 5px; overflow: hidden; border-bottom: 1px solid #eee; border-right: 1px solid #eee; }
.grid .ctr { text-align: center; padding: 0; }
.sel td { background: #4c86c8; color: #dfe9f6; }
.red td { color: #ee1c1c; }

.grip { width: 3px; height: 16px; border-left: 2px dotted #999; margin-right: 6px; }
.sep { width: 1px; height: 16px; background: #c4c4c4; }
.caret { width: 0; height: 0; border: 3px solid transparent; border-top: 3px solid #333; border-bottom: 0; }
.drop { position: absolute; right: 1px; top: 2px; width: 10px; height: 12px; background: #ddd; border: 1px solid #888; }
.drop::after { content: ""; position: absolute; left: 2px; top: 4px; border: 2px solid transparent; border-top: 2px solid #222; border-bottom: 0; }

/* window 1: tree of notices */
.w1-title { height: 25px; display: flex; align-items: center; padding-left: 9px; gap: 4px; background: linear-gradient(#d3e2f1, #c7dbef); }
.w1-title-text { font-size: 11.2px; width: 437px; white-space: nowrap; overflow: hidden; color: #1c1c1c; }
.aero-btns { display: flex; gap: 3px; margin-left: 6px; }
.aero-btn { width: 27px; height: 14px; border: 1px solid #7f95ad; border-radius: 2px; background: linear-gradient(#dfeaf5, #aac2da); font: normal 9px/12px "Liberation Sans", sans-serif; text-align: center; color: #34465c; }
.aero-close { background: linear-gradient(#e09c88, #c6493a); color: #fff; border-color: #8a3a30; }
.w1-body { display: flex; gap: 4px; padding: 2px 7px 0; height: 255px; }
.w1-tree { width: 314px; height: 240px; background: #fff; padding: 2px 0 0 1px; border: 1px solid #a8b4c0; overflow: hidden; font-size: 10.8px; }
.w1-row { display: flex; align-items: center; gap: 2px; height: 15px; white-space: nowrap; padding-left: 6px; }
.w1-row span { margin-left: 5px; }
.w1-root { padding-left: 1px; font-size: 9.8px; }
.w1-root span { margin-left: 1px; }
.w1-child { padding-left: 24px; }
.w1-child .w1-sel { margin-left: 2px; }
.w1-sel { background: #4c86c8; color: #dbe7f5; padding-left: 5px; width: 256px; overflow: hidden; font-size: 10px; line-height: 15px; }
.w1-side { width: 235px; height: 240px; background: #e3eaf2; overflow: hidden; font-size: 10.4px; }
.w1-tabs { height: 23px; }
.w1-t1 { width: 66px; font-size: 10.8px; }
.w1-t2 { width: 84px; }
.w1-t3 { width: 54px; justify-content: flex-start; padding-left: 4px; }
.w1-grid { margin: 0 2px; height: 200px; border: 1px solid #8c8c8c; background: #fff; display: flex; font-size: 10px; padding: 1px; align-items: flex-start; }
.w1-id { width: 31px; background: #a9a9a9; padding: 2px 0 2px 3px; }
.w1-poz { width: 27px; padding: 2px 0 2px 4px; }
.w1-grid span:last-child { flex: 1; background: #eee; padding: 2px 0; }

/* window 2: EASync */
.w2-title { height: 24px; display: flex; align-items: center; gap: 4px; padding-left: 4px; background: linear-gradient(#a9c9e8, #bad3eb); font-size: 12px; letter-spacing: -.8px; white-space: nowrap; }
.sq-btns { display: flex; margin-left: auto; gap: 2px; padding-right: 4px; }
.sq-btn { width: 18px; height: 17px; background: #dde6ee; border: 1px solid #8a96a2; font: normal 700 11px/14px "Liberation Sans", sans-serif; text-align: center; letter-spacing: 0; }
.w2-menu { height: 25px; display: flex; align-items: center; padding-left: 17px; gap: 17px; font-size: 11.6px; background: #f5f5f5; }
.w2-tabs { height: 18px; padding-left: 6px; font-size: 11px; letter-spacing: -.2px; background: #f1f1f1; }
.w2-t1 { width: 107px; } .w2-t2 { width: 109px; } .w2-t3 { width: 53px; } .w2-t4 { width: 140px; }
.w2-tabs .tab-on { height: 21px; }
.w2-tools { height: 28px; margin: 0 4px; display: flex; align-items: center; gap: 6px; padding-left: 5px; font-size: 11.4px; background: #fff; border-top: 1px solid #bdbdbd; }
.w2-grid { margin-left: 11px; width: 623px; border: 2px solid #9a9a9a; font-size: 11.2px; letter-spacing: -.4px; }
.w2-grid th { height: 22px; }
.w2-grid td { height: 15.8px; line-height: 14px; }
.w2-c1 { width: 172px; } .w2-c2 { width: 177px; } .w2-c3 { width: 89px; } .w2-c4 { width: 92px; } .w2-c5 { width: 93px; }

/* window 3: browser */
.glass-top { height: 18px; flex: none; display: flex; justify-content: flex-end; background: linear-gradient(90deg, #2e6cb8, #3b79c4 55%, #3070bd); }
.glass-ctl { display: flex; color: #fff; font: normal 700 11px/14px "Liberation Sans", sans-serif; margin-right: 8px; padding-top: 2px; }
.glass-ctl i { width: 18px; text-align: center; font-style: normal; }
.glass-nav { height: 21px; flex: none; display: flex; align-items: flex-start; padding-left: 7px; background: linear-gradient(90deg, #4f8acd, #6fa0d6 60%, #6a9dd4); }
.nav-back { width: 24px; height: 24px; margin-top: -4px; margin-right: 2px; }
.nav-fwd { width: 17px; height: 17px; margin-right: 2px; }
.addr { width: 359px; height: 17px; background: #fff; border: 1px solid #a8c0da; display: flex; align-items: center; padding-left: 3px; gap: 4px; font-size: 9.6px; overflow: hidden; white-space: nowrap; }
.addr-page { width: 10px; height: 12px; }
.addr-text { width: 305px; overflow: hidden; }
.addr-search { width: 30px; height: 12px; }
.ie-tab { width: 147px; height: 21px; margin-left: 4px; background: #fff; display: flex; align-items: center; font-size: 9.3px; white-space: nowrap; padding-left: 3px; gap: 3px; }
.ie-e { color: #2f8fe0; font: 700 15px/14px "Liberation Serif", serif; border-bottom: 2px solid #e8b020; border-radius: 50%; width: 12px; text-align: center; }
.ie-text { flex: 1; overflow: hidden; }
.ie-x { color: #8a8a8a; font-size: 12px; padding-right: 3px; }
.ie-new { width: 19px; height: 18px; background: #9ab9dc; }
.ie-tools { width: 56px; height: 16px; margin: 1px 9px 0 auto; }
.ie-page { flex: none; margin: 0 4px; height: 329px; display: flex; background: #fff; overflow: hidden; }
.xml { flex: 1; padding-top: 15.5px; overflow: hidden; font: 400 9.1px/9.55px "Liberation Sans", sans-serif; color: #a02838; white-space: nowrap; }
.xml i { font-style: normal; color: #2a2ac0; }
.xml b { color: #0c0c0c; font-weight: 700; letter-spacing: .2px; }
.xml s { display: inline-block; width: 8px; text-decoration: none; color: #e03050; }
.i9 { padding-left: 9px; } .i16 { padding-left: 16px; } .i24 { padding-left: 24px; } .i33 { padding-left: 33px; } .i40 { padding-left: 40px; } .i48 { padding-left: 48px; } .i63 { padding-left: 63px; } .i64 { padding-left: 64px; } .i78 { padding-left: 78px; }
.ie-scroll { width: 12px; margin-right: 1px; display: flex; flex-direction: column; align-items: center; padding-top: 10px; font-size: 14px; line-height: 12px; color: #555; }
.ie-thumb { display: block; width: 10px; height: 51px; background: #cfcfcf; margin-top: 4px; }
.ie-down { margin-top: auto; margin-bottom: 6px; }
.ie-status { flex: none; height: 18px; margin: 0 4px; background: linear-gradient(#f5f5f5, #e6e6e6); border-top: 1px solid #bbb; display: flex; align-items: center; justify-content: flex-end; gap: 2px; padding-right: 18px; font-size: 9.5px; color: #444; }
.ie-status .caret { margin-left: 12px; }
.ie-zoom { width: 9px; height: 9px; }
.glass-bottom { flex: 1; background: linear-gradient(90deg, #4f9bd2, #2d6eb8 50%, #3b93cf 80%, #1f5ba6); }

/* window 4 */
.w4-title { height: 29px; display: flex; align-items: center; padding-left: 7px; }
.w4-title-text { margin-left: 36px; width: 328px; font-size: 15px; letter-spacing: -.05px; white-space: nowrap; color: #222; }
.w4-btns { display: flex; gap: 2px; margin-left: 33px; }
.w4-btns i { width: 18px; height: 17px; background: #c8d4e0; border: 1px solid #555; font: normal 700 11px/15px "Liberation Sans", sans-serif; text-align: center; color: #111; }
.w4-btns .w4-close { background: #d2533c; }
.w4-body { display: flex; gap: 4px; padding-left: 7px; height: 80px; }
.w4-tree { width: 207px; background: #fff; border: 1px solid #9aa; font-size: 10.4px; padding-top: 2px; white-space: nowrap; overflow: hidden; }
.w4-row { display: flex; align-items: center; gap: 4px; height: 14px; margin-bottom: 1px; padding-left: 4px; }
.w4-root { background: #f0f0f0; padding-right: 2px; }
.w4-child { padding-left: 10px; }
.w4-child span { margin-left: 6px; }
.w4-side { width: 262px; font-size: 10.4px; background: #e6edf4; overflow: hidden; }
.w4-tabs { height: 22px; }
.w4-t1 { width: 68px; font-size: 11.4px; } .w4-t2 { width: 87px; } .w4-t3 { width: 74px; justify-content: flex-start; padding-left: 4px; }
.w4-grid { width: 258px; margin: 3px 0 0 3px; border: 2px solid #8c8c8c; border-bottom: 0; font-size: 10px; }
.w4-grid th { height: 17px; background: #e8e8e8; }
.w4-grid td { height: 17px; border: 0; border-right: 1px solid #dbe6f2; }
.w4-grid .w4-c1 { width: 34px; background: #aaa; } .w4-c2 { width: 20px; } .w4-c3 { width: 125px; } .w4-c4 { width: 79px; }

/* window 5 */
.w5-title { height: 21px; display: flex; align-items: center; gap: 2px; padding-left: 5px; background: linear-gradient(#a8c8e8, #b5d0ea); font-size: 13.4px; letter-spacing: -.1px; white-space: nowrap; }
.w5-menu { height: 20px; display: flex; align-items: center; gap: 15px; padding-left: 12px; font-size: 10px; background: #f4f4f4; }
.w5-tabs { height: 15px; padding-left: 3px; font-size: 9.6px; letter-spacing: -.2px; }
.w5-tabs .tab-on { height: 18px; }
.w5-t1 { width: 89px; } .w5-t2 { width: 93px; } .w5-t3 { width: 43px; } .w5-t4 { width: 119px; }
.w5-tools { height: 24px; margin: 0 4px; display: flex; align-items: center; gap: 5px; padding-left: 2px; font-size: 10px; background: #fff; border-top: 1px solid #bdbdbd; }
.w5-gridwrap { display: flex; margin-left: 6px; width: 509px; border: 2px solid #a0a0a0; border-bottom: 0; background: #fff; }
.w5-grid { flex: 1; width: 494px; font-size: 9.6px; letter-spacing: -.5px; }
.w5-grid th { height: 13.5px; line-height: 12px; }
.w5-grid td { height: 13.3px; line-height: 12px; max-width: 0; border-right: 0; }
.w5-c1 { width: 145px; }
.w5-scroll { width: 12px; flex: none; background: #f0f0f0; font-size: 7px; text-align: center; line-height: 12px; color: #222; }
.w5-scroll i { display: block; height: 45px; background: #dcdcdc; border-bottom: 1px solid #555; }

/* window 6 */
.w6-title { height: 30px; display: flex; align-items: center; padding-left: 9px; }
.w6-ico { width: 16px; height: 18px; }
.w6-title-text { margin-left: 98px; font-size: 16px; letter-spacing: -.32px; white-space: nowrap; color: #222; }
.w6-body { display: flex; gap: 7px; padding-left: 7px; height: 388px; }
.w6-left { width: 319px; background: #f0f0f0; border: 1px solid #9aa4ae; display: flex; flex-direction: column; flex: none; }
.w6-top { display: flex; height: 369px; background: #fff; }
.w6-tree { flex: 1; overflow: hidden; font-size: 11px; min-width: 0; white-space: nowrap; background: linear-gradient(#cfcfcf, #cfcfcf) 11px 0 / 1px 100% no-repeat #fff; }
.w6-row { display: flex; align-items: center; height: 15.8px; padding-left: 7px; gap: 3px; overflow: hidden; }
.ico-doc { width: 16px; height: 15px; margin-left: 6px; }
.dash { flex: none; width: 6px; margin-left: 8px; }
.w6-text { flex: none; }
.w6-root { height: 17px; padding-left: 4px; gap: 4px; background: #fff; }
.bolt { width: 15px; height: 15px; background: #e8141c; position: relative; flex: none; }
.bolt::after { content: ""; position: absolute; left: 4px; top: 2px; width: 7px; height: 11px; background: #f6e020; clip-path: polygon(60% 0, 100% 0, 55% 42%, 90% 42%, 10% 100%, 35% 55%, 0 55%); }
.w6-sel { background: #4c86c8; color: #cfe0f2; padding: 0 3px; line-height: 15px; margin-left: 3px; }
.vbar { width: 16px; flex: none; display: flex; flex-direction: column; background: #f0f0f0; }
.sb-btn { background: #fff; display: flex; align-items: center; justify-content: center; height: 17px; font-size: 13px; color: #555; flex: none; }
.sb-track { flex: 1; background: #d9d9d9; display: flex; align-items: center; justify-content: center; border: 1px solid #ccc; }
.sb-track i { font-style: normal; font-size: 11px; color: #666; }
.hbar { height: 17px; flex: none; display: flex; background: #fff; align-items: stretch; border-top: 1px solid #ddd; }
.sb-h { width: 16px; height: auto; background: #f8f8f8; font-size: 15px; }
.hbar-thumb { width: 56px; background: #d9d9d9; border: 1px solid #bbb; text-align: center; font-size: 8px; line-height: 15px; color: #555; }
.hbar-fill { flex: 1; background: #fff; }
.sb-corner { width: 16px; background: #eee; }
.w6-right { flex: 1; min-width: 0; overflow: hidden; font-size: 11px; background: #e6e6e6; }
.w6-tabs { height: 25px; }
.w6-t1 { width: 68px; font-size: 11.6px; background: #fff; } .w6-t2 { width: 91px; } .w6-t3 { width: 124px; } .w6-t4 { width: 40px; justify-content: flex-start; padding-left: 5px; }
.w6-gridwrap { margin-left: 2px; border: 2px solid #8c8c8c; border-right: 0; height: 357px; background: #fff; overflow: hidden; }
.w6-grid { width: 318px; font-size: 11px; }
.w6-grid th { height: 17px; border-bottom: 1px solid #aaa; padding-left: 3px; }
.w6-grid td { height: 16.7px; line-height: 14px; border-bottom: 1px solid #f0f0f0; padding-left: 2px; }
.w6-c1 { width: 35px; } .w6-c2 { width: 23px; } .w6-c3 { width: 174px; } .w6-c4 { width: 86px; }
.hd-id { background: #a8a8a8; padding: 0 2px; }
.hbar-right { height: 18px; margin-top: 5px; }
.hbar-thumb-r { width: 120px; }
```
